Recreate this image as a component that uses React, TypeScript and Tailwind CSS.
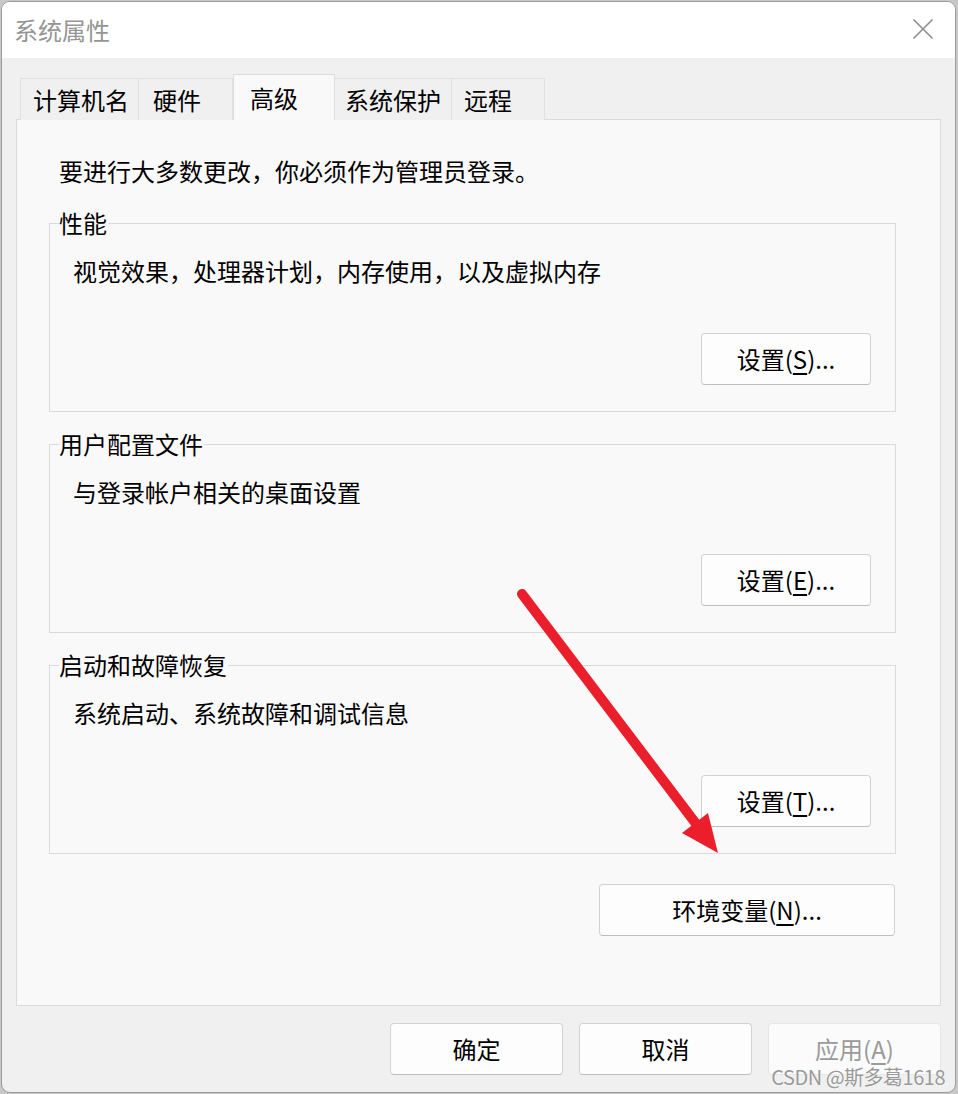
import React from "react";

const FONT = { fontFamily: '"Noto Sans CJK SC", "Noto Sans", sans-serif' };

function Mn({ c }: { c: string }) {
  return <span className="underline decoration-[1.5px] underline-offset-[4px]">{c}</span>;
}

function Btn({
  children,
  w,
  disabled,
}: {
  children: React.ReactNode;
  w: string;
  disabled?: boolean;
}) {
  return (
    <div
      className={
        "h-[52px] flex items-center justify-center rounded-[4px] text-[24px] leading-[32px] " +
        w +
        (disabled
          ? " bg-[#fbfbfb] border border-[#e6e6e6] text-[#9a9a9a]"
          : " bg-[#fdfdfd] border border-[#d2d2d2] border-b-[#bdbdbd] text-black")
      }
    >
      {children}
    </div>
  );
}

function Group({ title, desc, btn }: { title: string; desc: string; btn: React.ReactNode }) {
  return (
    <div className="relative w-[847px] h-[189px] border border-[#dadada] flex flex-col">
      <div className="absolute left-[9px] top-[-17px] text-[24px] leading-[32px] bg-[#f9f9f9] pr-px text-black">
        {title}
      </div>
      <div className="pl-[23px] pt-[31px] text-[24px] leading-[32px] text-black">{desc}</div>
      <div className="flex justify-end pr-[24px] mt-[46px]">{btn}</div>
    </div>
  );
}

export default function App() {
  const tabs = [
    { t: "计算机名", w: "w-[119px]", pl: "pl-[12px]", first: true },
    { t: "硬件", w: "w-[95px]", pl: "pl-[14px]" },
    { t: "高级", w: "w-[102px]", pl: "pl-[16px]", sel: true },
    { t: "系统保护", w: "w-[118px]", pl: "pl-[10px]" },
    { t: "远程", w: "w-[94px]", pl: "pl-[12px]" },
  ];
  return (
    <div className="relative w-[958px] h-[1094px] bg-[#c8c8c8] pt-px pl-px" style={FONT}>
      <div className="w-[955px] h-[1092px] rounded-[9px] border border-[#9c9c9c] bg-[#f0f0f0] overflow-hidden flex flex-col">
        {/* Title bar */}
        <div className="h-[56px] bg-white flex items-center justify-between pl-[12px] pr-[21px] shrink-0">
          <span className="text-[24px] leading-[32px] text-[#959595]">系统属性</span>
          <svg width="22" height="22" viewBox="0 0 22 22" className="mt-[-2px]">
            <path d="M1.5 1.5 L20.5 20.5 M20.5 1.5 L1.5 20.5" stroke="#8c8c8c" strokeWidth="1.6" fill="none" />
          </svg>
        </div>
        {/* Body */}
        <div className="pl-[14px] flex flex-col">
          <div className="relative z-10 mt-[16px] ml-[4px] h-[46px] flex items-end -mb-px">
            {tabs.map((tb) =>
              tb.sel ? (
                <div
                  key={tb.t}
                  className={
                    "h-[46px] bg-[#f9f9f9] border border-b-0 border-[#dcdcdc] flex items-center text-[24px] leading-[32px] text-black " +
                    tb.w +
                    " " +
                    tb.pl
                  }
                >
                  {tb.t}
                </div>
              ) : (
                <div
                  key={tb.t}
                  className={
                    "h-[42px] bg-[#f0f0f0] border border-b-0 border-[#e0e0e0] flex items-center text-[24px] leading-[32px] text-black " +
                    (tb.first ? "" : "-ml-px ") +
                    tb.w +
                    " " +
                    tb.pl
                  }
                >
                  {tb.t}
                </div>
              )
            )}
          </div>
          <div className="w-[925px] h-[887px] border border-[#dadada] bg-[#f9f9f9] pl-[32px] pt-[35px] flex flex-col">
            <div className="ml-[10px] text-[24px] leading-[32px] text-black">
              要进行大多数更改，你必须作为管理员登录。
            </div>
            <div className="mt-[36px]">
              <Group
                title="性能"
                desc="视觉效果，处理器计划，内存使用，以及虚拟内存"
                btn={
                  <Btn w="w-[170px]">
                    设置(<Mn c="S" />)...
                  </Btn>
                }
              />
            </div>
            <div className="mt-[32px]">
              <Group
                title="用户配置文件"
                desc="与登录帐户相关的桌面设置"
                btn={
                  <Btn w="w-[170px]">
                    设置(<Mn c="E" />)...
                  </Btn>
                }
              />
            </div>
            <div className="mt-[32px]">
              <Group
                title="启动和故障恢复"
                desc="系统启动、系统故障和调试信息"
                btn={
                  <Btn w="w-[170px]">
                    设置(<Mn c="T" />)...
                  </Btn>
                }
              />
            </div>
            <div className="w-[847px] flex justify-end pr-[1px] mt-[30px]">
              <Btn w="w-[296px]">
                环境变量(<Mn c="N" />)...
              </Btn>
            </div>
          </div>
          <div className="w-[925px] flex justify-end gap-[16px] mt-[17px]">
            <Btn w="w-[173px]">确定</Btn>
            <Btn w="w-[173px]">取消</Btn>
            <Btn w="w-[173px]" disabled>
              应用(<Mn c="A" />)
            </Btn>
          </div>
        </div>
      </div>

      {/* Annotation arrow */}
      <svg className="absolute left-0 top-0 pointer-events-none" width="958" height="1094" viewBox="0 0 958 1094">
        <line x1="522" y1="594" x2="700" y2="829" stroke="#ea1f2b" strokeWidth="10" strokeLinecap="round" />
        <polygon points="682,833 708,813 718,853" fill="#ea1f2b" />
      </svg>

      {/* Watermark */}
      <div
        className="absolute right-[13px] bottom-[5px] text-[20px] leading-[24px] text-[#9a9a9a] tracking-[-0.5px]"
        style={{ fontFamily: '"Liberation Sans Narrow", "Noto Sans CJK SC", sans-serif', textShadow: "0 0 2px #fff" }}
      >
        CSDN @斯多葛1618
      </div>
    </div>
  );
}
